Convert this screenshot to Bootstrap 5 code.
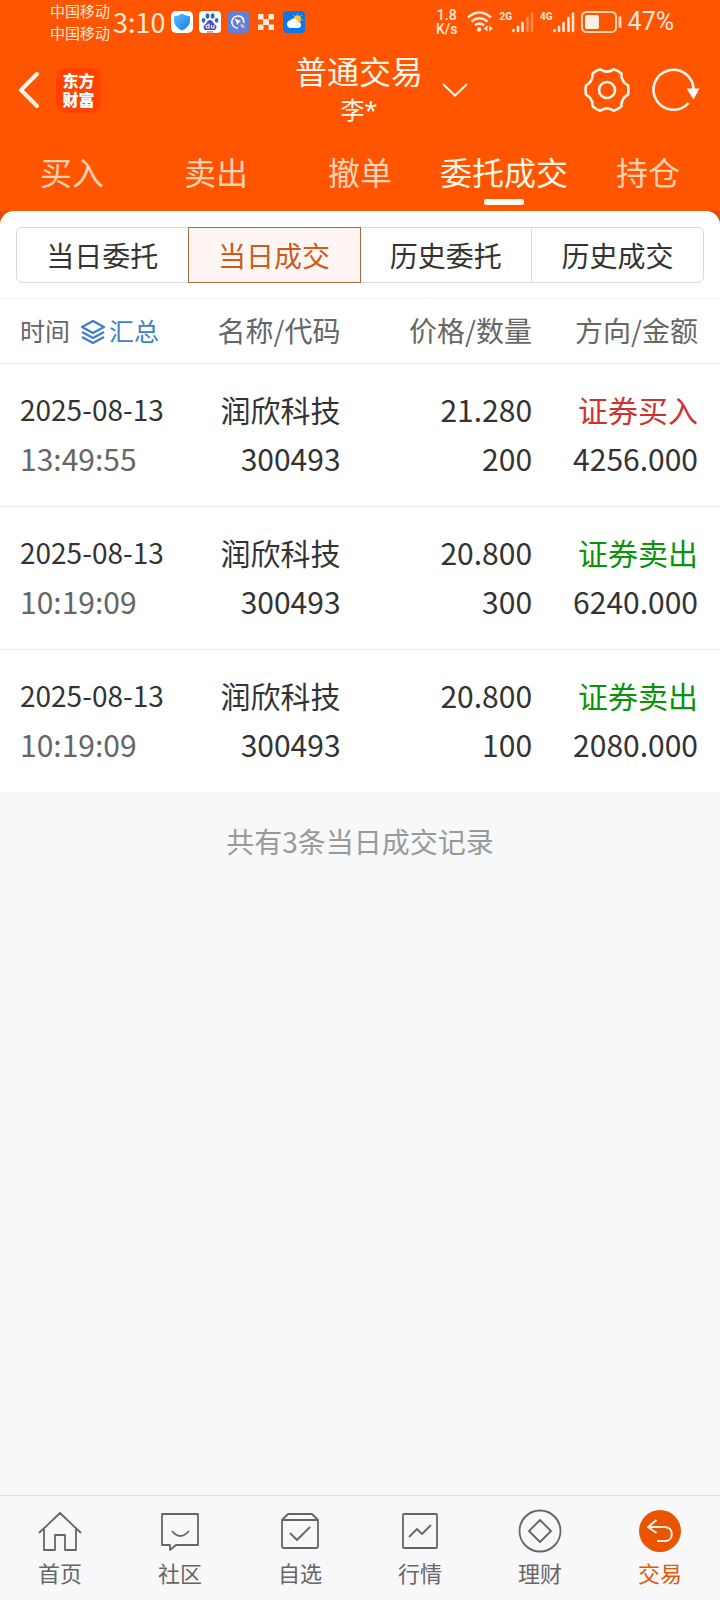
<!DOCTYPE html>
<html lang="zh-CN">
<head>
<meta charset="utf-8">
<meta name="viewport" content="width=device-width, initial-scale=1">
<title>普通交易</title>
<link href="https://cdn.jsdelivr.net/npm/bootstrap@5.3.0/dist/css/bootstrap.min.css" rel="stylesheet">
<style>
  body { font-family: "Noto Sans CJK SC", sans-serif; background: #f7f8fa; color: #333; }
  svg { display: block; flex: none; }
  .top-area { background: #ff5500; color: #fff6ea; }
  .status-bar { height: 46px; color: #ffe9da; padding: 0 46px 2px 50px; }
  .carrier { font-size: 15px; line-height: 22px; }
  .clock { font-size: 27px; line-height: 40px; padding: 0 6px 0 3px; }
  .net-speed { font: 500 14px/14px Roboto, sans-serif; }
  .net-kind { font: 700 10px/12px Roboto, sans-serif; }
  .percent { font: 25px/40px Roboto, sans-serif; }
  .status-icons { gap: 6px; }
  .title-bar { display: grid; grid-template-columns: 1fr auto 1fr; height: 88px; padding: 0 20px 0 18px; }
  .brand-logo { width: 45px; height: 45px; border-radius: 10px; background: #ff4200; font-size: 16px; line-height: 19px; font-weight: 900; color: #fff; }
  .title-main { font-size: 32px; line-height: 40px; font-weight: 400; }
  .title-sub { font-family: "Noto Sans", "Noto Sans CJK SC", sans-serif; font-size: 24px; line-height: 32px; }
  .title-tools { gap: 22px; }
  .plain-btn { border: 0; background: none; padding: 0; color: inherit; }
  .main-tabs a { font-size: 32px; line-height: 48px; color: #ffd2b4; padding: 13px 0 6px; }
  .main-tabs a.active { color: #fff6e6; }
  .main-tabs a::after { content: ""; width: 40px; height: 6px; margin-top: 4px; border-radius: 2px; }
  .main-tabs a.active::after { background: #fffaf0; }
  .panel-back { background: #db5006; }
  .panel { border-radius: 14px 14px 0 0; background: #fff; padding: 16px 16px 15px; }
  .seg .btn { --bs-btn-border-color: #d9dbdc; --bs-btn-color: #333; --bs-btn-active-color: #cf5a1c; --bs-btn-active-bg: #fff6f3; --bs-btn-active-border-color: #a86a3c;
    height: 56px; padding: 0; font-size: 28px; line-height: 50px; border-radius: 6px; flex: 1 1 0; }
  .deals { table-layout: fixed; background: #fff; border-top: 1px solid #f5f5f5; }
  .deals th { font-weight: 400; font-size: 28px; line-height: 62px; color: #666; padding: 0 0 2px; text-align: right; white-space: nowrap; border-bottom: 1px solid #ebebeb; }
  .deals td { font-size: 30px; line-height: 49px; padding: 21px 0 23px; text-align: right; border-bottom: 1px solid #ebebeb; white-space: nowrap; }
  .deals tbody tr:last-child td { border-bottom: 0; }
  .deals th:first-child, .deals td:first-child { text-align: left; padding-left: 20px; }
  .deals th:last-child, .deals td:last-child { padding-right: 22px; }
  .deals th:first-child { font-size: 25px; }
  .col-time { width: 25%; }
  .col-name { width: 22.3%; }
  .col-price { width: 26.6%; }
  .day { font-size: 28px; }
  .clocked { color: #666; }
  .sum-btn { color: #3f7fca; font-size: 25px; padding-left: 3px; }
  .buy { color: #d0312d; }
  .sell { color: #0a930a; }
  .total-note { font-size: 28px; line-height: 40px; color: #999; padding-top: 29px; }
  .bottom-nav { background: #f8f8fa; border-top: 1px solid #dfe2e3; padding: 12px 0; }
  .bottom-nav a { font-size: 22px; line-height: 32px; color: #666; gap: 2px; }
  .bottom-nav a.active { color: #e85400; }
</style>
</head>
<body class="d-flex flex-column min-vh-100">
<header class="top-area">
  <div class="status-bar d-flex justify-content-between align-items-center">
    <div class="d-flex align-items-center">
      <div class="carrier"><div>中国移动</div><div>中国移动</div></div>
      <div class="clock">3:10</div>
      <div class="status-icons d-flex align-items-center">
        <svg width="22" height="22" viewBox="0 0 22 22"><defs><linearGradient id="sh" x2="1" y2="1"><stop stop-color="#5cc0ff"/><stop offset="1" stop-color="#147bea"/></linearGradient></defs><rect width="22" height="22" rx="5" fill="#fff"/><path d="M11 2.500Q14.500 5 19 5.300V10Q18.500 16 11 19.500Q3.500 16 3 10V5.300Q7.500 5 11 2.500Z" fill="url(#sh)"/></svg>
        <svg width="22" height="22" viewBox="0 0 22 22"><rect width="22" height="22" rx="4" fill="#fff"/><g fill="#2467c9"><ellipse cx="8.500" cy="5" rx="2" ry="2.700"/><ellipse cx="13.600" cy="5" rx="2" ry="2.700"/><ellipse cx="4.500" cy="9.300" rx="1.800" ry="2.400"/><ellipse cx="17.600" cy="9.300" rx="1.800" ry="2.400"/></g><path d="M11 9C13.500 9 14 12 16 13.500C19 16 17 19.500 14 19H8C5 19.500 3 16 6 13.500C8 12 8.500 9 11 9Z" fill="#4a50c8"/><path d="M10 12.500v4.500H8.500a1.300 1.300 0 0 1 0-3H10M12.500 14v2q0 1 1.200 1H15v-3" fill="none" stroke="#fff" stroke-width="1.100"/><path d="M8 21h6" stroke="#e04040"/></svg>
        <svg width="22" height="22" viewBox="0 0 22 22"><rect width="22" height="22" rx="4" fill="#6180d8"/><path d="M16.700 12A6 6 0 1 0 11 17M16.800 9.500A6 6 0 0 0 11 5" fill="none" stroke="#fff" stroke-width="1.600"/><path d="M7.500 7.500L14 10L11.800 11.500L10.500 14Z" fill="#fff"/><path d="M14 13.500L17 16.500" stroke="#f3bd83" stroke-width="2.500"/></svg>
        <svg width="22" height="22" viewBox="-3 -3 22 22" fill="#ffeade"><path d="M0 0h5.500v5.500H0zM10.500 0H16v5.500h-5.500zM5 5h6v6H5zM0 10.500h5.500V16H0zM10.500 10.500H16V16h-5.500z"/></svg>
        <svg width="22" height="22" viewBox="0 0 22 22"><rect width="22" height="22" rx="4" fill="#0878ea"/><circle cx="14.500" cy="8" r="3.700" fill="#ffc531"/><path d="M14.500 2.500v1M10 4l1 1M19 4l-1 1M20 9h-1" stroke="#ffc531"/><path d="M7.500 17a3.800 3.800 0 0 1-.5-7.500a4.500 4.500 0 0 1 8 1.500a3 3 0 0 1 0 6Z" fill="#fff"/></svg>
      </div>
    </div>
    <div class="status-icons d-flex align-items-center">
      <div class="net-speed text-center me-1"><div>1.8</div><div>K/s</div></div>
      <svg width="26" height="22" viewBox="0 0 26 22" fill="none" stroke="#ffeade" stroke-width="2.600"><path d="M1 6.500Q12.500-3.500 24 6.500M4.500 10.500Q12.500 3.800 20.500 10.500M8 14.300Q12.500 10.800 17 14.300"/><circle cx="12" cy="18.500" r="2.200" fill="#ffeade" stroke="none"/><path d="M20.500 14.500v6l-4-3zM22 14.500v6l4-3z" fill="#ffeade" stroke="none"/></svg>
      <div class="d-flex align-items-start">
        <div class="net-kind">2G</div>
        <svg width="22" height="22" viewBox="0 0 22 22" stroke="#ffeade" stroke-width="2.600" stroke-linecap="round"><path d="M1.500 20v-1M6 20v-4M10.500 20v-8"/><path d="M15.500 20V7M20 20V2.500" opacity=".35"/></svg>
      </div>
      <div class="d-flex align-items-start">
        <div class="net-kind">4G</div>
        <svg width="22" height="22" viewBox="0 0 22 22" stroke="#ffeade" stroke-width="2.600" stroke-linecap="round"><path d="M1.500 20v-1M6 20v-4M10.500 20v-8M15.500 20V7M20 20V2.500"/></svg>
      </div>
      <svg width="41" height="22" viewBox="0 0 41 22"><rect x="1" y="1" width="34" height="20" rx="4.500" fill="none" stroke="#ffd3b8" stroke-width="2"/><rect x="4" y="4" width="14" height="14" rx="2" fill="#fff0e6"/><path d="M39 6.500v9" stroke="#ffd3b8" stroke-width="3" stroke-linecap="round"/></svg>
      <div class="percent">47%</div>
    </div>
  </div>

  <div class="title-bar align-items-center">
    <div class="d-flex align-items-center">
      <button class="plain-btn me-3" type="button" aria-label="返回"><svg width="22" height="38" viewBox="0 0 22 38" fill="none" stroke="#fff6ea" stroke-width="4" stroke-linecap="round" stroke-linejoin="round"><path d="M19 3L3 19L19 35"/></svg></button>
      <div class="brand-logo d-flex flex-column align-items-center justify-content-center"><span>东方</span><span>财富</span></div>
    </div>
    <div class="text-center pb-1">
      <h1 class="title-main mb-1">普通交易</h1>
      <div class="title-sub">李*</div>
    </div>
    <div class="d-flex align-items-center justify-content-between">
      <button class="plain-btn ms-3 ps-1" type="button" aria-label="切换账户"><svg width="24" height="14" viewBox="0 0 24 14" fill="none" stroke="#fff6ea" stroke-width="2"><path d="M0 1L12 12.500L24 1"/></svg></button>
      <div class="title-tools d-flex align-items-center">
        <button class="plain-btn" type="button" aria-label="设置"><svg width="46" height="46" viewBox="-23 -23 46 46" fill="none" stroke="#fff6ea" stroke-width="2.600" stroke-linejoin="round"><path d="M21 -4.600Q21.800 0 21 4.600C16 7.500 14 10.500 14.500 16.300Q11 19.500 6.800 20.700C1.500 17.600 -1.500 17.600 -6.800 20.700Q-11 19.500 -14.500 16.300C-14 10.500 -16 7.500 -21 4.600Q-21.800 0 -21 -4.600C-16 -7.500 -14 -10.500 -14.500 -16.300Q-11 -19.500 -6.800 -20.700C-1.500 -17.600 1.500 -17.600 6.800 -20.700Q11 -19.500 14.500 -16.300C14 -10.500 16 -7.500 21 -4.600Z"/><circle r="8"/></svg></button>
        <button class="plain-btn" type="button" aria-label="刷新"><svg width="48" height="44" viewBox="0 0 48 44" fill="none" stroke="#fff6ea" stroke-width="2.600"><path d="M41.500 22A20 20 0 1 0 36.500 35"/><path d="M34.500 20.500H47.500L41.500 31.500Z" fill="#fff" stroke="none"/></svg></button>
      </div>
    </div>
  </div>

  <nav class="main-tabs nav nav-fill flex-nowrap">
    <a class="col d-flex flex-column align-items-center text-decoration-none" href="#">买入</a>
    <a class="col d-flex flex-column align-items-center text-decoration-none" href="#">卖出</a>
    <a class="col d-flex flex-column align-items-center text-decoration-none" href="#">撤单</a>
    <a class="col d-flex flex-column align-items-center text-decoration-none active" href="#" aria-current="page">委托成交</a>
    <a class="col d-flex flex-column align-items-center text-decoration-none" href="#">持仓</a>
  </nav>
</header>

<main class="flex-grow-1">
  <div class="panel-back">
    <div class="panel">
      <div class="seg btn-group d-flex" role="group" aria-label="查询类型">
        <button type="button" class="btn">当日委托</button>
        <button type="button" class="btn active">当日成交</button>
        <button type="button" class="btn">历史委托</button>
        <button type="button" class="btn">历史成交</button>
      </div>
    </div>
  </div>
  <table class="deals w-100">
    <colgroup><col class="col-time"><col class="col-name"><col class="col-price"><col></colgroup>
    <thead>
      <tr>
        <th scope="col"><div class="d-flex align-items-center"><span class="me-2">时间</span><button class="plain-btn sum-btn d-flex align-items-center" type="button"><svg class="mt-1 me-1" width="24" height="26" viewBox="1 0 24 26" fill="none" stroke="#3f7fca" stroke-width="2.200" stroke-linejoin="round"><path d="M13 2L24 8L13 14L2 8ZM2 13L13 19L24 13M2 18L13 24L24 18"/></svg>汇总</button></div></th>
        <th scope="col">名称/代码</th>
        <th scope="col">价格/数量</th>
        <th scope="col">方向/金额</th>
      </tr>
    </thead>
    <tbody>
      <tr>
        <td><div class="day">2025-08-13</div><div class="clocked">13:49:55</div></td>
        <td><div>润欣科技</div><div>300493</div></td>
        <td><div>21.280</div><div>200</div></td>
        <td><div class="buy">证券买入</div><div>4256.000</div></td>
      </tr>
      <tr>
        <td><div class="day">2025-08-13</div><div class="clocked">10:19:09</div></td>
        <td><div>润欣科技</div><div>300493</div></td>
        <td><div>20.800</div><div>300</div></td>
        <td><div class="sell">证券卖出</div><div>6240.000</div></td>
      </tr>
      <tr>
        <td><div class="day">2025-08-13</div><div class="clocked">10:19:09</div></td>
        <td><div>润欣科技</div><div>300493</div></td>
        <td><div>20.800</div><div>100</div></td>
        <td><div class="sell">证券卖出</div><div>2080.000</div></td>
      </tr>
    </tbody>
  </table>
  <p class="total-note text-center m-0">共有3条当日成交记录</p>
</main>

<nav class="bottom-nav d-flex">
  <a class="col d-flex flex-column align-items-center text-decoration-none" href="#"><svg width="44" height="46" viewBox="0 0 44 46" fill="none" stroke="#666" stroke-width="1.800" stroke-linejoin="round"><path d="M1 25L22 5L43 25M6 21V42H17V27H27V42H38V21"/></svg>首页</a>
  <a class="col d-flex flex-column align-items-center text-decoration-none" href="#"><svg width="44" height="46" viewBox="0 0 44 46" fill="none" stroke="#666" stroke-width="1.800" stroke-linejoin="round"><path d="M4 6H40V37H18L12 42V37H4ZM14 23Q22 33 31 23"/></svg>社区</a>
  <a class="col d-flex flex-column align-items-center text-decoration-none" href="#"><svg width="44" height="46" viewBox="0 0 44 46" fill="none" stroke="#666" stroke-width="1.800" stroke-linejoin="round"><path d="M4 12L10 6H34L40 12V38Q40 40 38 40H6Q4 40 4 38ZM4 12H40M12 25L19 32L32 19"/></svg>自选</a>
  <a class="col d-flex flex-column align-items-center text-decoration-none" href="#"><svg width="44" height="46" viewBox="0 0 44 46" fill="none" stroke="#666" stroke-width="1.800" stroke-linejoin="round"><rect x="5" y="6" width="34" height="34" rx="1"/><path d="M11 29L19 21L24 26L33 17"/></svg>行情</a>
  <a class="col d-flex flex-column align-items-center text-decoration-none" href="#"><svg width="44" height="46" viewBox="0 0 44 46" fill="none" stroke="#666" stroke-width="1.800" stroke-linejoin="round"><circle cx="22" cy="23" r="20.500"/><path d="M22 12L33 23L22 34L11 23Z"/></svg>理财</a>
  <a class="col d-flex flex-column align-items-center text-decoration-none active" href="#" aria-current="page"><svg width="44" height="46" viewBox="0 0 44 46" fill="none" stroke="#fff0e0" stroke-width="2" stroke-linejoin="round"><circle cx="22" cy="23" r="21" fill="#e85400" stroke="none"/><path d="M18.500 12L10 19L18.500 25M10 19H27C36 19 36 33 27 33H19"/></svg>交易</a>
</nav>
<script src="https://cdn.jsdelivr.net/npm/bootstrap@5.3.0/dist/js/bootstrap.bundle.min.js"></script>
</body>
</html>
